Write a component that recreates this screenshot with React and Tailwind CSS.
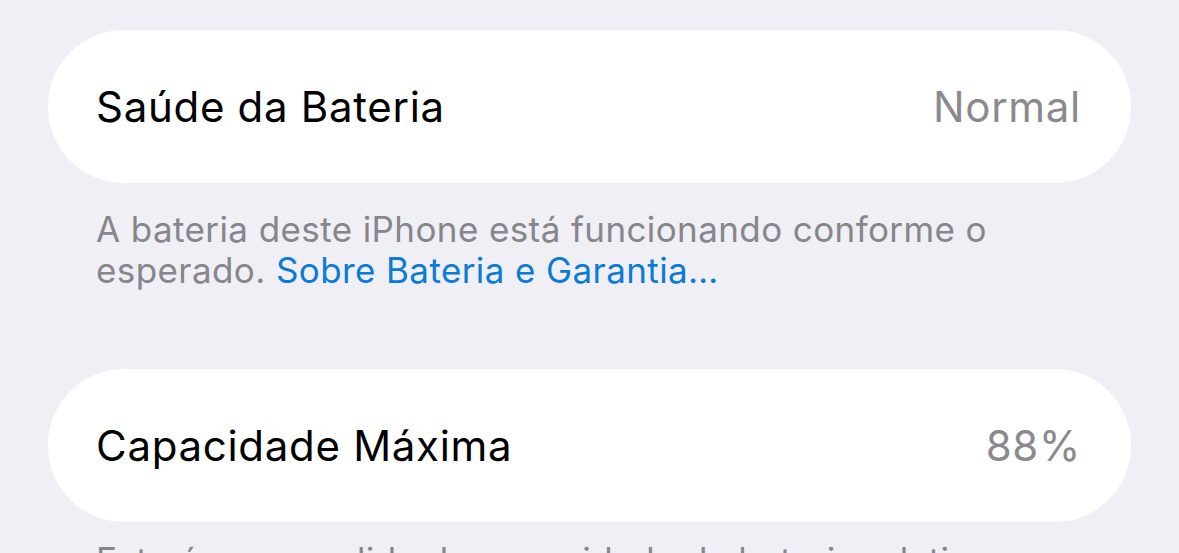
export default function App() {
  const font = { fontFamily: 'Inter, "Noto Sans", sans-serif' };
  return (
    <div className="w-[1179px] h-[553px] overflow-hidden bg-[#f0eff5] pt-[30px] px-[48px]" style={font}>
      {/* Battery health */}
      <div className="h-[153px] rounded-[76px] bg-white flex items-center justify-between pl-[48px] pr-[50px]">
        <span className="text-[42px] tracking-[0.7px] text-black">Saúde da Bateria</span>
        <span className="text-[42px] tracking-[0.7px] text-[#8a8a8e]">Normal</span>
      </div>
      <p className="pl-[48px] pr-[130px] mt-[26px] text-[35px] leading-[41px] tracking-[0.4px] text-[#86868c]">
        A bateria deste iPhone está funcionando conforme o esperado.{' '}
        <span className="text-[#0a7bd6]">Sobre Bateria e Garantia…</span>
      </p>

      {/* Maximum capacity */}
      <div className="mt-[78px] h-[153px] rounded-[76px] bg-white flex items-center justify-between pl-[48px] pr-[50px]">
        <span className="text-[42px] tracking-[0.7px] text-black">Capacidade Máxima</span>
        <span className="text-[42px] tracking-[0.7px] text-[#8a8a8e]">88%</span>
      </div>
      <p className="pl-[48px] pr-[130px] mt-[18px] text-[35px] leading-[41px] tracking-[0.4px] text-[#86868c]">
        Esta é uma medida da capacidade da bateria relativa a quando era nova.
      </p>
    </div>
  );
}
